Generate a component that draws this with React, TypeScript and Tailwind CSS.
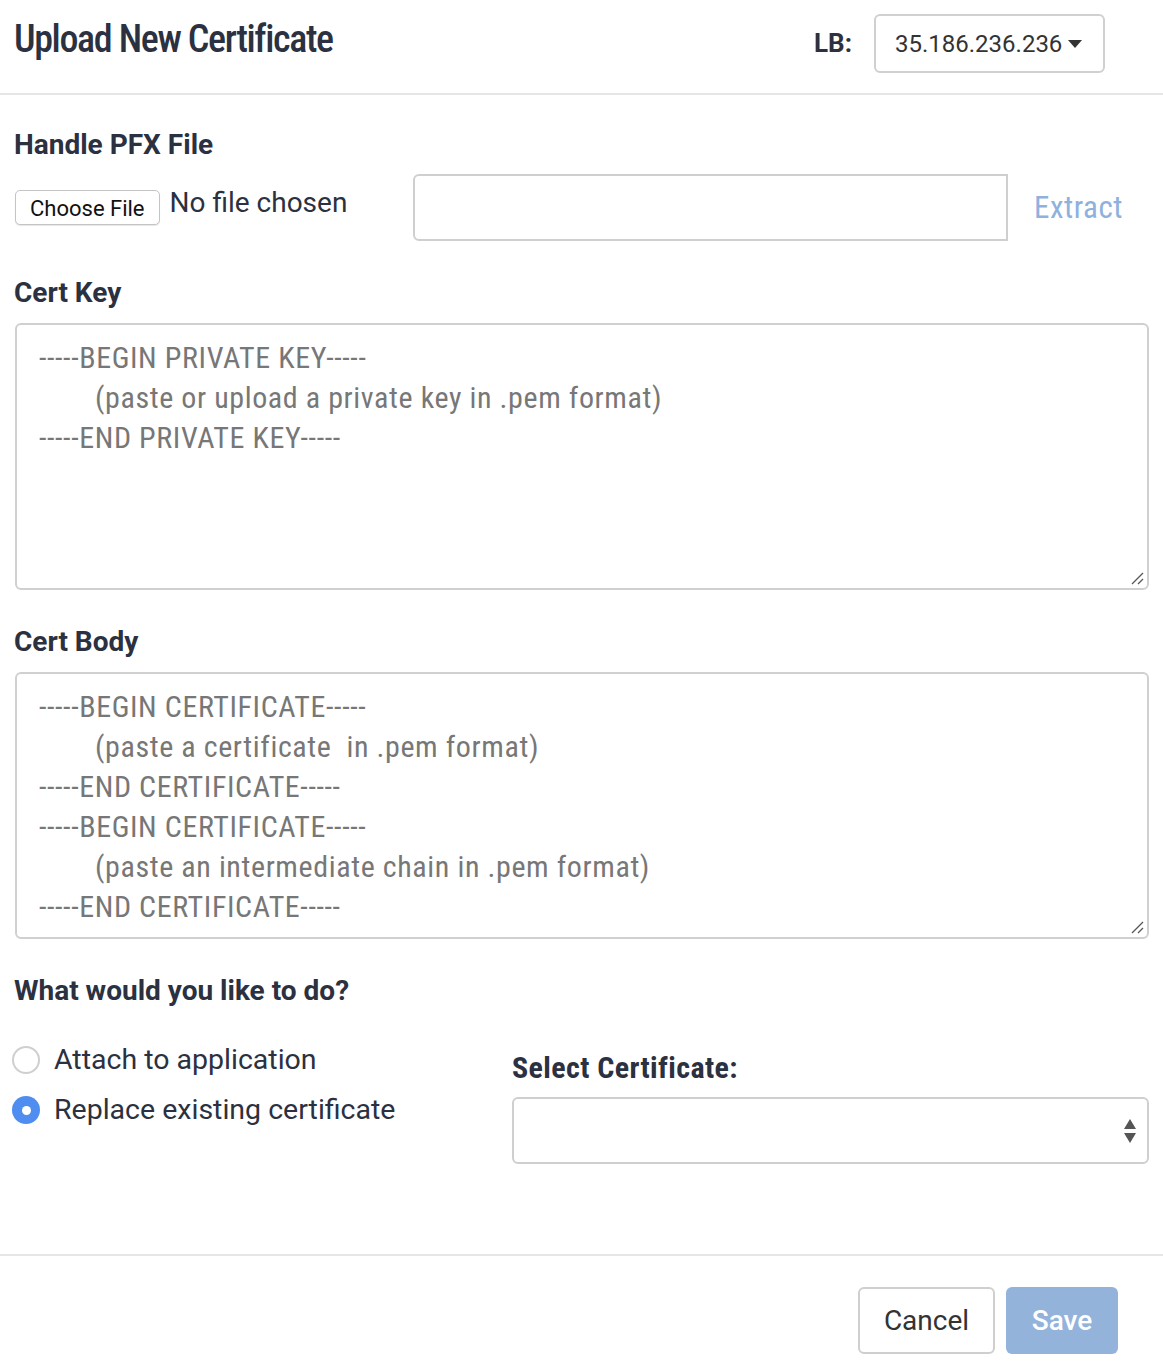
const cond = "font-['Roboto_Condensed','Liberation_Sans_Narrow',Roboto,sans-serif]";

function Resize() {
  return (
    <svg className="absolute right-[3px] bottom-[3px]" width="14" height="14" viewBox="0 0 14 14">
      <line x1="2" y1="13" x2="13" y2="2" stroke="#555" strokeWidth="1.3" />
      <line x1="8" y1="13" x2="13" y2="8" stroke="#555" strokeWidth="1.3" />
    </svg>
  );
}

function PemBox({ lines }: { lines: { text: string; indent?: boolean }[] }) {
  return (
    <div className="relative h-[267px] rounded-[6px] border-2 border-[#d0d0d0] px-[22px] pt-[15px]">
      {lines.map((l, i) => (
        <div
          key={i}
          className={`${cond} h-[40px] whitespace-pre text-[30px] leading-[36px] tracking-[0.6px] text-[#777] ${l.indent ? "pl-[56px]" : ""}`}
        >
          {l.text}
        </div>
      ))}
      <Resize />
    </div>
  );
}

export default function App() {
  return (
    <div className="w-[1163px] bg-white font-[Roboto,sans-serif] text-[#2b3140]">
      {/* Header */}
      <div className="flex h-[95px] items-start justify-between border-b-2 border-[#e6e6e6] pl-[14px] pr-[58px]">
        <h1 className={`${cond} mt-[16px] text-[38px] font-medium leading-[46px] tracking-[-1.35px]`}>Upload New Certificate</h1>
        <div className="mt-[14px] flex items-center gap-[22px]">
          <span className="text-[26px] font-bold">LB:</span>
          <div className="flex h-[59px] w-[231px] items-center gap-[5px] rounded-[6px] border-2 border-[#d0d0d0] pl-[19px] text-[24px] text-[#333]">
            <span>35.186.236.236</span>
            <svg width="16" height="10" viewBox="0 0 16 10"><path d="M1 1h14L8 9z" fill="#333" /></svg>
          </div>
        </div>
      </div>

      {/* Body */}
      <div className="px-[14px] pt-[28px]">
        <div className="text-[28px] font-bold leading-[44px]">Handle PFX File</div>
        <div className="mt-[7px] flex items-center">
          <div className="flex w-[399px] items-center">
            <button className="ml-[1px] h-[35px] rounded-[5px] border border-[#c4c4c4] bg-white px-[14px] pt-[2px] text-[22px] leading-none text-[#111] shadow-[0_1px_1px_rgba(0,0,0,0.1)]">
              Choose File
            </button>
            <span className="ml-[10px] -mt-[10px] text-[28px]">No file chosen</span>
          </div>
          <div className="h-[67px] w-[595px] rounded-l-[6px] border-2 border-[#cfcfcf]" />
          <span className={`${cond} ml-[26px] mt-[2px] text-[31px] tracking-[0.5px] text-[#8eb1de]`}>Extract</span>
        </div>

        <div className="mt-[30px] text-[28px] font-bold leading-[44px]">Cert Key</div>
        <div className="mt-[8px] pl-[1px]">
          <PemBox
            lines={[
              { text: "-----BEGIN PRIVATE KEY-----" },
              { text: "(paste or upload a private key in .pem format)", indent: true },
              { text: "-----END PRIVATE KEY-----" },
            ]}
          />
        </div>

        <div className="mt-[30px] text-[28px] font-bold leading-[44px]">Cert Body</div>
        <div className="mt-[8px] pl-[1px]">
          <PemBox
            lines={[
              { text: "-----BEGIN CERTIFICATE-----" },
              { text: "(paste a certificate  in .pem format)", indent: true },
              { text: "-----END CERTIFICATE-----" },
              { text: "-----BEGIN CERTIFICATE-----" },
              { text: "(paste an intermediate chain in .pem format)", indent: true },
              { text: "-----END CERTIFICATE-----" },
            ]}
          />
        </div>

        <div className="mt-[30px] text-[28px] font-bold leading-[44px]">What would you like to do?</div>

        <div className="mt-[22px] flex">
          <div className="w-[500px] -ml-[2px]">
            <label className="flex h-[50px] items-center gap-[14px]">
              <span className="h-[28px] w-[28px] rounded-full border-2 border-[#cfcfcf] bg-white" />
              <span className="text-[28.5px]">Attach to application</span>
            </label>
            <label className="flex h-[50px] items-center gap-[14px]">
              <span className="flex h-[28px] w-[28px] items-center justify-center rounded-full bg-[#4f8ef0]">
                <span className="h-[9px] w-[9px] rounded-full bg-white" />
              </span>
              <span className="text-[28.5px]">Replace existing certificate</span>
            </label>
          </div>
          <div className="flex-1 pt-[13px]">
            <div className={`${cond} text-[30px] font-bold leading-[40px] tracking-[0.4px]`}>Select Certificate:</div>
            <div className="mt-[9px] flex h-[67px] items-center justify-end rounded-[6px] border-2 border-[#cfcfcf] pr-[10px]">
              <svg width="14" height="28" viewBox="0 0 14 28">
                <path d="M7 2l6 10H1z" fill="#555" />
                <path d="M1 16h12L7 26z" fill="#555" />
              </svg>
            </div>
          </div>
        </div>
      </div>

      {/* Footer */}
      <div className="mt-[90px] flex h-[115px] items-start justify-end gap-[11px] border-t-2 border-[#e6e6e6] pr-[45px] pt-[31px]">
        <button className="h-[67px] w-[137px] rounded-[6px] border-2 border-[#cfcfcf] bg-white text-[28px] text-[#333]">
          Cancel
        </button>
        <button className="h-[67px] w-[112px] rounded-[6px] bg-[#93b3da] text-[28px] font-medium text-white">
          Save
        </button>
      </div>
    </div>
  );
}
